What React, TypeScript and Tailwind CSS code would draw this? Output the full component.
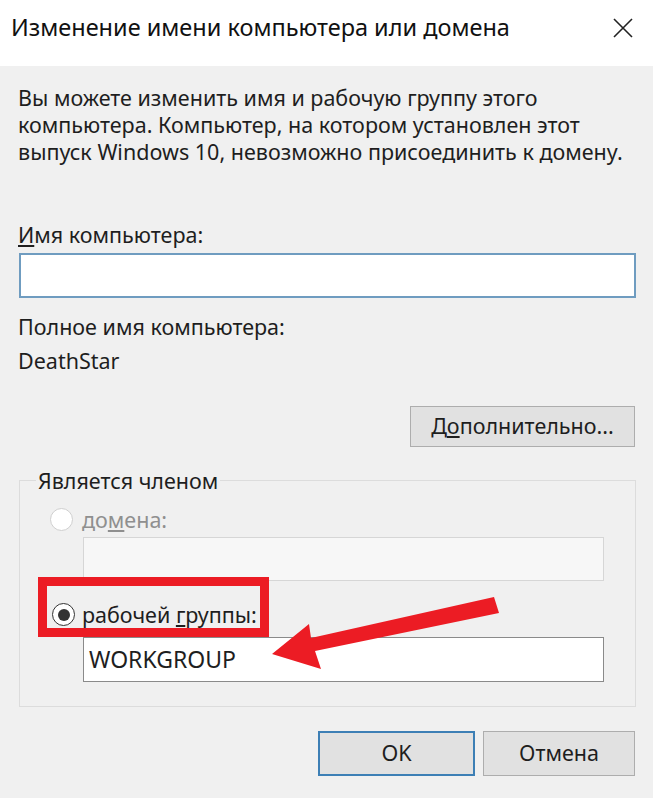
import React from "react";

// Windows 10 "Computer name / domain changes" dialog with red annotation
function Radio({ checked, disabled }: { checked?: boolean; disabled?: boolean }) {
  return (
    <span
      className={`flex h-[23px] w-[23px] items-center justify-center rounded-full border bg-white ${
        disabled ? "border-[#cfcfcf]" : "border-[#333333]"
      }`}
    >
      {checked && <span className="h-[12px] w-[12px] rounded-full bg-[#333333]" />}
    </span>
  );
}

export default function App() {
  return (
    <div
      className="relative h-[798px] w-[653px] overflow-hidden bg-[#f0f0f0] text-[#1e1e1e]"
      style={{ fontFamily: '"Noto Sans", "Open Sans", sans-serif' }}
    >
      {/* title bar */}
      <div className="flex h-[66px] items-start justify-between bg-white pl-[11px] pr-[20px] pt-[12px]">
        <span className="text-[23.5px] leading-[30px] text-[#111]">
          Изменение имени компьютера или домена
        </span>
        <svg width="20" height="20" viewBox="0 0 20 20" className="mt-[6px]">
          <path d="M1 1 L19 19 M19 1 L1 19" stroke="#222" strokeWidth="1.6" />
        </svg>
      </div>

      <div className="px-[18px] pt-[18px] text-[21.5px]">
        <p className="leading-[27px]">
          Вы можете изменить имя и рабочую группу этого
          <br />
          компьютера. Компьютер, на котором установлен этот
          <br />
          выпуск Windows 10, невозможно присоединить к домену.
        </p>

        <div className="mt-[56px] leading-[27px]">
          <span className="underline underline-offset-2">И</span>мя компьютера:
        </div>
        <div className="ml-[1px] mt-[5px] h-[45px] w-[617px] border-2 border-[#6f9cc0] bg-white" />

        <div className="mt-[15px] leading-[27px]">Полное имя компьютера:</div>
        <div className="mt-[7px] leading-[27px]">DeathStar</div>

        <div className="mt-[32px] flex justify-end">
          <button className="h-[41px] w-[225px] border border-[#adadad] bg-[#e1e1e1] text-[21.5px] text-[#1e1e1e]">
            Д<span className="underline underline-offset-2">о</span>полнительно...
          </button>
        </div>

        <fieldset className="ml-[1px] mt-[20px] h-[240px] w-[617px] border border-[#dcdcdc] pl-[30px]">
          <legend className="-ml-[14px] px-[2px] text-[21.5px] leading-[27px]">
            Является членом
          </legend>
          <div className="mt-[12px] flex items-center gap-[9px] leading-[27px]">
            <Radio disabled />
            <span className="text-[#8f8f8f]">
              до<span className="underline underline-offset-2">м</span>ена:
            </span>
          </div>
          <div className="ml-[33px] mt-[4px] h-[44px] w-[521px] border border-[#d6d6d6] bg-[#f7f7f7]" />
          <div className="mt-[20px] flex items-center gap-[7px] leading-[27px]">
            <span className="ml-[2px]">
              <Radio checked />
            </span>
            <span>
              рабочей <span className="underline underline-offset-2">г</span>руппы:
            </span>
          </div>
          <div className="ml-[33px] mt-[9px] flex h-[45px] w-[521px] items-center border border-[#8a8a8a] bg-white pl-[5px] text-[23px]">
            WORKGROUP
          </div>
        </fieldset>

        <div className="mt-[24px] flex justify-end gap-[8px]">
          <button className="h-[45px] w-[157px] border-2 border-[#3d7fb5] bg-[#e1e1e1] text-[21.5px]">
            OK
          </button>
          <button className="h-[45px] w-[152px] border border-[#adadad] bg-[#e1e1e1] text-[21.5px]">
            Отмена
          </button>
        </div>
      </div>

      {/* red annotation: box + arrow */}
      <div className="absolute left-[38px] top-[577px] h-[60px] w-[231px] border-[9px] border-[#ec1c24]" />
      <svg className="absolute left-0 top-0" width="653" height="798" viewBox="0 0 653 798">
        <polygon
          points="272,654 309,624 311,638 494,597 499,613 315,651 321,669"
          fill="#ec1c24"
        />
      </svg>
    </div>
  );
}
